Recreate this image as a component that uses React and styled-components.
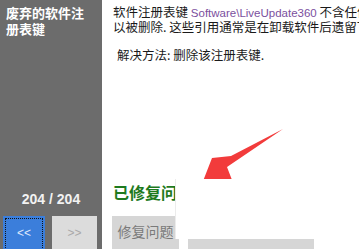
import React from 'react';
import styled, { createGlobalStyle } from 'styled-components';

const GlobalStyle = createGlobalStyle`
  html, body {
    margin: 0;
    padding: 0;
    background: #fff;
  }
  body {
    font-family: "Noto Sans CJK SC", "Liberation Sans", sans-serif;
  }
`;

const Frame = styled.div`
  position: relative;
  width: 359px;
  height: 249px;
  overflow: hidden;
  display: flex;
  background: #fff;
`;

const Sidebar = styled.div`
  width: 102px;
  flex-shrink: 0;
  background: #6c6c6c;
  display: flex;
  flex-direction: column;
  padding: 5px 3px 0 3px;
  box-sizing: border-box;
`;

const SideTitle = styled.div`
  width: 82px;
  color: #fff;
  font-weight: 700;
  font-size: 13px;
  line-height: 16px;
  padding-left: 3px;
`;

const Counter = styled.div`
  margin-top: auto;
  color: #f2f2f2;
  font-family: "Liberation Sans", sans-serif;
  font-weight: 700;
  font-size: 14px;
  text-align: center;
  padding-bottom: 9px;
`;

const NavRow = styled.div`
  display: flex;
  gap: 7px;
  height: 38px;
  margin-bottom: -5px;
`;

const NavButton = styled.div`
  position: relative;
  width: ${p => (p.$active ? '42px' : '45px')};
  display: flex;
  align-items: center;
  justify-content: center;
  background: ${p => (p.$active ? '#3b7edb' : '#dcdcdc')};
  color: ${p => (p.$active ? '#dfe9fb' : '#a9a9a9')};
  font-family: "Liberation Sans", sans-serif;
  font-size: 12px;
  padding-bottom: 4px;
  box-sizing: border-box;
  ${p =>
    p.$active &&
    `
    &::after {
      content: '';
      position: absolute;
      left: 2px;
      top: 2px;
      right: 2px;
      bottom: 2px;
      border: 1px dotted #111;
    }
  `}
`;

const Main = styled.div`
  flex: 1;
  display: flex;
  flex-direction: column;
  padding: 5px 0 0 11px;
  min-width: 0;
`;

const Line = styled.div`
  white-space: nowrap;
  font-size: 12.5px;
  line-height: 14px;
  color: #1a1a1a;
`;

const Path = styled.span`
  font-family: "Liberation Sans", sans-serif;
  font-size: 11.5px;
  color: #7b4f9e;
`;

const Fix = styled.div`
  white-space: nowrap;
  font-size: 12.5px;
  line-height: 14px;
  color: #1a1a1a;
  margin: 14px 0 0 4px;
`;

const Done = styled.div`
  margin-top: 120px;
  white-space: nowrap;
  font-size: 16px;
  font-weight: 700;
  line-height: 20px;
  color: #1e7a1e;
`;

const ActionRow = styled.div`
  display: flex;
  gap: 9px;
  margin-top: 14px;
  margin-left: -1px;
`;

const ActionButton = styled.div`
  width: ${p => p.$w}px;
  height: 36px;
  flex-shrink: 0;
  background: #d6d6d6;
  color: #7a7a7a;
  font-size: 14px;
  display: flex;
  align-items: center;
  justify-content: center;
  padding-bottom: 7px;
  box-sizing: border-box;
`;

const Arrow = styled.svg`
  position: absolute;
  left: 0;
  top: 0;
  pointer-events: none;
`;

const Cover = styled.div`
  position: absolute;
  left: 175px;
  top: 179px;
  width: 200px;
  height: 60px;
  background: #fff;
  border-left: 1px solid #ececec;
`;

export default function App() {
  return (
    <>
      <GlobalStyle />
      <Frame>
        <Sidebar>
          <SideTitle>废弃的软件注册表键</SideTitle>
          <Counter>204 / 204</Counter>
          <NavRow>
            <NavButton $active>&lt;&lt;</NavButton>
            <NavButton>&gt;&gt;</NavButton>
          </NavRow>
        </Sidebar>
        <Main>
          <Line>
            软件注册表键 <Path>Software\LiveUpdate360</Path> 不含任何有效引用，可
          </Line>
          <Line>以被删除. 这些引用通常是在卸载软件后遗留下来的.</Line>
          <Fix>解决方法: 删除该注册表键.</Fix>
          <Done>已修复问题</Done>
          <ActionRow>
            <ActionButton $w={67}>修复问题</ActionButton>
            <ActionButton $w={126}>忽略此问题并继续</ActionButton>
          </ActionRow>
        </Main>
        <Arrow width="359" height="249" viewBox="0 0 359 249">
          <polygon
            points="283,129 231,156 212,158 198,194 232,180 227,167"
            fill="#f23b3b"
          />
        </Arrow>
        <Cover />
      </Frame>
    </>
  );
}
